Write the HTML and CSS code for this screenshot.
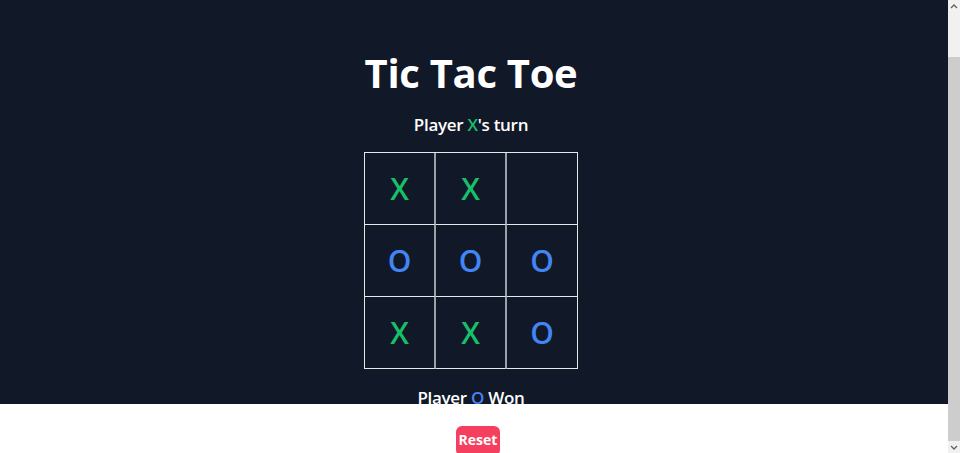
FILE: index.html
```html
<!DOCTYPE html>
<html lang="en">
<head>
<meta charset="utf-8">
<title>Tic Tac Toe</title>
<link rel="stylesheet" href="styles.css">
</head>
<body>
<div class="page">
  <main class="game">
    <h1 class="title">Tic Tac Toe</h1>
    <p class="status">Player <span class="x">X</span>'s turn</p>
    <div class="board">
      <div class="cell x">X</div>
      <div class="cell x">X</div>
      <div class="cell"></div>
      <div class="cell o">O</div>
      <div class="cell o">O</div>
      <div class="cell o">O</div>
      <div class="cell x">X</div>
      <div class="cell x">X</div>
      <div class="cell o">O</div>
    </div>
    <p class="winner">Player <span class="o">O</span> Won</p>
  </main>
  <section class="controls">
    <button class="reset" type="button">Reset</button>
  </section>
</div>
<aside class="scrollbar" aria-hidden="true">
  <span class="arrow">
    <svg width="8" height="5" viewBox="0 0 8 5"><path d="M1 4 L4 1 L7 4" fill="none" stroke="#606060" stroke-width="1.3"/></svg>
  </span>
  <span class="track"><span class="thumb"></span></span>
  <span class="arrow">
    <svg width="8" height="5" viewBox="0 0 8 5"><path d="M1 1 L4 4 L7 1" fill="none" stroke="#606060" stroke-width="1.3"/></svg>
  </span>
</aside>
</body>
</html>
```

FILE: styles.css
```css
html, body {
  margin: 0;
  padding: 0;
  background: #ffffff;
  font-family: "Open Sans", "Liberation Sans", sans-serif;
  overflow: hidden;
}

.page {
  width: 948px;
  height: 453px;
  overflow: hidden;
}

.game {
  height: 404px;
  background: #111827;
  color: #ffffff;
  display: flex;
  flex-direction: column;
  align-items: center;
  box-sizing: border-box;
  padding: 49px 6px 0 0;
}

.title {
  margin: 0;
  font-size: 40px;
  line-height: 48px;
  font-weight: 700;
  letter-spacing: -0.3px;
}

.status,
.winner {
  margin: 16px 0 0;
  font-size: 17px;
  line-height: 24px;
  font-weight: 600;
  letter-spacing: -0.3px;
}

.x { color: #19be6b; }
.o { color: #4285f4; }

.board {
  margin-top: 15px;
  display: grid;
  grid-template-columns: repeat(3, 71px);
  grid-template-rows: repeat(3, 72px);
  border-top: 1px solid #e5e7eb;
  border-left: 1px solid #e5e7eb;
}

.cell {
  box-sizing: border-box;
  display: flex;
  align-items: center;
  justify-content: center;
  border-right: 2px solid #9ca0a8;
  border-bottom: 1px solid #e5e7eb;
  font-size: 30px;
  font-weight: 600;
  line-height: 1;
}

.cell:nth-child(3n) {
  border-right: 1px solid #e5e7eb;
}

.winner {
  margin-top: 17px;
}

.controls {
  display: flex;
  justify-content: center;
  padding: 22px 0 0 8px;
  background: #ffffff;
}

.reset {
  border: none;
  background: #f43f5e;
  color: #ffffff;
  font-family: "Open Sans", "Liberation Sans", sans-serif;
  font-size: 14px;
  font-weight: 700;
  line-height: 20px;
  padding: 4px 3px 6px;
  border-radius: 6px;
}

.scrollbar {
  position: fixed;
  top: 0;
  right: 0;
  width: 12px;
  height: 100%;
  display: flex;
  flex-direction: column;
  background: #f1f1f1;
}

.arrow {
  height: 12px;
  display: flex;
  align-items: center;
  justify-content: center;
}

.track {
  flex: 1;
  display: flex;
  flex-direction: column;
  padding-top: 45px;
}

.thumb {
  flex: 1;
  background: #cdcdcd;
}
```
